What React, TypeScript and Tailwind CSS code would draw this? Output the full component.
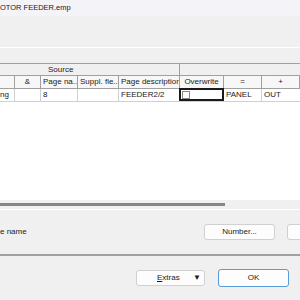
const cols = "grid grid-cols-[15px_26px_37px_41px_61px_44px_38px_1fr]";

const headers = ["", "&", "Page na...", "Suppl. fie...", "Page description", "Overwrite", "=", "+"];

export default function App() {
  return (
    <div className="w-[300px] h-[300px] overflow-hidden bg-[#f0f0f0] font-['Liberation_Sans',Arial,sans-serif] text-[8px] leading-none text-[#1a1a1a] flex flex-col">
      {/* title bar */}
      <div className="h-[16px] bg-[#f3f3f8] flex items-center text-[7.5px]">
        OTOR FEEDER.emp
      </div>

      {/* toolbar area */}
      <div className="h-[32px] border-b border-white" />
      <div className="h-[15px]" />

      {/* table */}
      <div className="h-[137px] bg-white border-t border-[#a0a0a0] flex flex-col">
        <div className="flex h-[12px] bg-[#f0f0f0] border-b border-[#a0a0a0]">
          <div className="w-[180px] border-r border-[#a0a0a0] pl-[48px] flex items-center">Source</div>
          <div className="flex-1" />
        </div>
        <div className={`${cols} h-[13px] bg-[#f7f7f7] border-b border-[#a0a0a0]`}>
          {headers.map((h, i) => (
            <div
              key={i}
              className={`border-r border-[#a0a0a0] flex items-center overflow-hidden whitespace-nowrap ${
                i >= 5 || i === 1 ? "justify-center" : "pl-[2px]"
              }`}
            >
              {h}
            </div>
          ))}
        </div>
        <div className={`${cols} h-[13px] border-b border-[#d0d0d0]`}>
          <div className="border-r border-[#d0d0d0] flex items-center">ng</div>
          <div className="border-r border-[#d0d0d0]" />
          <div className="border-r border-[#d0d0d0] flex items-center pl-[2px]">8</div>
          <div className="border-r border-[#d0d0d0]" />
          <div className="border-r border-[#d0d0d0] flex items-center pl-[2px]">FEEDER2/2</div>
          <div className="border-2 border-[#1a1a1a] -mt-[1px] -ml-[1px] flex items-center pl-[1px]">
            <div className="w-[8px] h-[8px] border border-[#8a8a8a] bg-white" />
          </div>
          <div className="border-r border-[#d0d0d0] flex items-center pl-[2px]">PANEL</div>
          <div className="flex items-center pl-[2px]">OUT</div>
        </div>
        <div className="flex-1" />
      </div>

      {/* horizontal scrollbar */}
      <div className="h-[9px] bg-[#f0f0f0] pt-[3px]">
        <div className="w-[225px] h-[3px] bg-[#858585]" />
      </div>

      {/* lower group */}
      <div className="h-[45px] border-t border-white flex items-center">
        <div className="w-[204px] shrink-0 text-[8px]">e name</div>
        <button className="shrink-0 w-[71px] h-[16px] bg-[#fdfdfd] border border-[#d0d0d0] rounded-[3px] text-[8px]">
          Number...
        </button>
        <button className="shrink-0 ml-[12px] w-[71px] h-[16px] bg-[#fdfdfd] border border-[#d0d0d0] rounded-[3px]" />
      </div>
      <div className="h-[2px] bg-[#a0a0a0]" />

      {/* footer */}
      <div className="flex-1 flex items-start pt-[13px] pl-[136px] gap-[13px]">
        <button className="shrink-0 w-[69px] h-[16px] bg-[#fdfdfd] border border-[#d0d0d0] rounded-[3px] flex items-center pl-[20px] pr-[3px] mt-[1px]">
          <span>
            <span className="underline">E</span>xtras
          </span>
          <span className="ml-auto text-[8px]">▼</span>
        </button>
        <button className="shrink-0 w-[71px] h-[18px] bg-[#fdfdfd] border border-[#5a9ad8] rounded-[3px]">OK</button>
      </div>
    </div>
  );
}
